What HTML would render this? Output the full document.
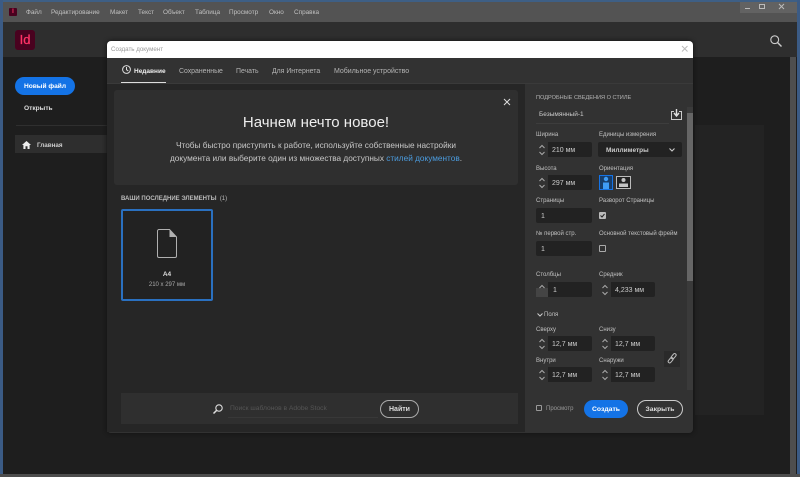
<!DOCTYPE html>
<html lang="ru"><head><meta charset="utf-8"><title>InDesign</title>
<style>
*{box-sizing:border-box}
html,body{margin:0;padding:0;width:800px;height:477px;overflow:hidden;background:#4a4a4a}
body{font-family:"Liberation Sans","Noto Sans CJK SC",sans-serif;position:relative;filter:blur(.3px)}
.a{position:absolute}
.t{position:absolute;white-space:nowrap;color:#c0c0c0;font-size:6px;line-height:10px;margin-top:1px}
.m{top:7px;color:#c0c0c0;font-size:6.4px}
.tb{top:66px;font-size:6.9px;color:#b4b4b4}
.i{position:absolute;background:#222;height:15px;border-radius:2px;width:56px}
.s{position:absolute;background:#323232;height:15px;width:12px}
.v{position:absolute;white-space:nowrap;color:#cccccc;font-size:7px;line-height:15px;margin-top:1px}
svg{position:absolute;overflow:visible}
</style></head><body>
<div class="a" style="left:0;top:0;width:800px;height:2px;background:#3e5f85"></div>
<div class="a" style="left:0;top:2px;width:800px;height:20px;background:#535353"></div>
<div class="a" style="left:0;top:0;width:3px;height:477px;background:#3b5b85"></div>
<div class="a" style="left:797px;top:0;width:3px;height:477px;background:#3b5b85"></div>
<div class="a" style="left:3px;top:22px;width:794px;height:35px;background:#2e2e2e"></div>
<div class="a" style="left:3px;top:57px;width:794px;height:417px;background:#1e1e1e"></div>
<div class="a" style="left:0;top:474px;width:800px;height:3px;background:#4d4d4d"></div>
<div class="a" style="left:790px;top:57px;width:6px;height:417px;background:#4e4e4e"></div>
<div class="a" style="left:695px;top:125px;width:69px;height:290px;background:#232323"></div>

<div class="a" style="left:9px;top:8px;width:8px;height:8px;background:#49021f;border-radius:1px;color:#ff3366;font-size:6px;line-height:8px;text-align:center;font-weight:bold">I</div>
<div class="t m" style="left:26px">Файл</div>
<div class="t m" style="left:51px">Редактирование</div>
<div class="t m" style="left:110px">Макет</div>
<div class="t m" style="left:138px">Текст</div>
<div class="t m" style="left:163px">Объект</div>
<div class="t m" style="left:195px">Таблица</div>
<div class="t m" style="left:229px">Просмотр</div>
<div class="t m" style="left:269px">Окно</div>
<div class="t m" style="left:294px">Справка</div>
<div class="a" style="left:740px;top:2px;width:57px;height:11px;background:#626262"></div>
<div class="a" style="left:745px;top:8px;width:5px;height:1px;background:#bbb"></div>
<div class="a" style="left:759px;top:4px;width:6px;height:5px;border:1px solid #bbb"></div>
<svg style="left:779px;top:4px" width="5" height="5"><path d="M0 0L5 5M5 0L0 5" stroke="#bbb" fill="none"/></svg>

<div class="a" style="left:15px;top:30px;width:20px;height:20px;background:#49021f;border-radius:3px;color:#ff3366;font-size:13px;line-height:20px;text-align:center;-webkit-text-stroke:.25px #ff3366">Id</div>
<svg style="left:770px;top:35px" width="12" height="12"><circle cx="4.7" cy="4.7" r="3.9" fill="none" stroke="#ccc" stroke-width="1.1"/><path d="M7.5 7.5L11.5 11.5" stroke="#ccc" stroke-width="1.4"/></svg>

<div class="a" style="left:15px;top:77px;width:60px;height:18px;padding-top:1px;background:#1473e6;border-radius:9px;color:#fff;font-size:6.6px;font-weight:bold;line-height:18px;text-align:center">Новый файл</div>
<div class="t" style="left:24px;top:103px;color:#ddd;font-size:6.6px;font-weight:bold">Открыть</div>
<div class="a" style="left:16px;top:125px;width:91px;height:1px;background:#2f2f2f"></div>
<div class="a" style="left:15px;top:135px;width:92px;height:18px;background:#2e2e2e"></div>
<svg style="left:22px;top:141px" width="9" height="8"><path d="M4.5 0L0 4H1.4V8H3.5V5.3H5.5V8H7.6V4H9Z" fill="#eee"/></svg>
<div class="t" style="left:37px;top:140px;color:#ccc;font-size:6.3px;font-weight:bold">Главная</div>

<div class="a" style="left:107px;top:41px;width:586px;height:392px;background:#323232;border-radius:4px;box-shadow:0 0 5px #111"></div>
<div class="a" style="left:107px;top:41px;width:586px;height:17px;background:#fff;border-radius:4px 4px 0 0"></div>
<div class="t" style="left:111px;top:44px;color:#999;font-size:6.2px">Создать документ</div>
<svg style="left:682px;top:46px" width="5.5" height="5.5"><path d="M0 0L5.5 5.5M5.5 0L0 5.5" stroke="#bbb" fill="none"/></svg>

<svg style="left:122px;top:65px" width="9" height="9"><circle cx="4.5" cy="4.5" r="3.9" fill="none" stroke="#ddd" stroke-width="1"/><path d="M4.5 2V4.7L6.3 6" fill="none" stroke="#ddd"/></svg>
<div class="t tb" style="left:134px;color:#eee;font-size:6.5px;font-weight:bold">Недавние</div>
<div class="t tb" style="left:179px">Сохраненные</div>
<div class="t tb" style="left:236px">Печать</div>
<div class="t tb" style="left:272px">Для Интернета</div>
<div class="t tb" style="left:334px;font-size:7px">Мобильное устройство</div>
<div class="a" style="left:121px;top:82px;width:45px;height:1.5px;background:#ddd"></div>
<div class="a" style="left:107px;top:83px;width:586px;height:1px;background:#3a3a3a"></div>

<div class="a" style="left:107px;top:84px;width:418px;height:348px;background:#262626"></div>
<div class="a" style="left:114px;top:90px;width:404px;height:95px;background:#2f2f2f;border-radius:3px"></div>
<svg style="left:503.500px;top:99px" width="6" height="6"><path d="M0 0L6 6M6 0L0 6" stroke="#ddd" stroke-width="1" fill="none"/></svg>
<div class="t" style="left:114px;top:113px;width:404px;text-align:center;font-size:15px;line-height:18px;color:#eee">Начнем нечто новое!</div>
<div class="t" style="left:114px;top:138px;width:404px;text-align:center;font-size:8.250px;line-height:13px;color:#c8c8c8">Чтобы быстро приступить к работе, используйте собственные настройки</div>
<div class="t" style="left:114px;top:151px;width:404px;text-align:center;font-size:8.250px;line-height:13px;color:#c8c8c8">документа или выберите один из множества доступных <span style="color:#4b9cdf">стилей документов</span>.</div>

<div class="t" style="left:121px;top:193px;font-size:6px;color:#bbb;font-weight:bold">ВАШИ ПОСЛЕДНИЕ ЭЛЕМЕНТЫ &nbsp;<span style="font-weight:normal">(1)</span></div>
<div class="a" style="left:121px;top:209px;width:92px;height:92px;border:2px solid #2a70c0;border-radius:2px;background:#222"></div>
<svg style="left:157px;top:229px" width="20" height="29"><path d="M2 .5H12.5L19.5 8V27A1.500 1.500 0 0 1 18 28.500H2A1.500 1.500 0 0 1 .5 27V2A1.500 1.500 0 0 1 2 .5Z" fill="none" stroke="#b0b0b0" stroke-width="1"/><path d="M12.5 .5V8H19.5Z" fill="#b0b0b0"/></svg>
<div class="t" style="left:121px;top:269px;width:92px;text-align:center;font-size:6.5px;font-weight:bold;color:#ddd">А4</div>
<div class="t" style="left:121px;top:279px;width:92px;text-align:center;font-size:6px;color:#aaa">210 x 297 мм</div>

<div class="a" style="left:121px;top:393px;width:397px;height:31px;background:#2f2f2f"></div>
<svg style="left:213px;top:404px" width="10" height="10"><circle cx="6" cy="4" r="3.2" fill="none" stroke="#ddd" stroke-width="1.1"/><path d="M3.700 6.300L.5 9.500" stroke="#ddd" stroke-width="1.5"/></svg>
<div class="t" style="left:230px;top:403px;font-size:6.7px;color:#555">Поиск шаблонов в Adobe Stock</div>
<div class="a" style="left:228px;top:417px;width:150px;height:1px;background:#383838"></div>
<div class="a" style="left:380px;top:400px;width:39px;height:17.5px;padding-top:1px;border:1px solid #aaa;border-radius:9px;color:#ddd;font-size:7px;font-weight:bold;line-height:15.5px;text-align:center">Найти</div>

<div class="t" style="left:536px;top:92px;font-size:5.6px;color:#b4b4b4">ПОДРОБНЫЕ СВЕДЕНИЯ О СТИЛЕ</div>
<div class="v" style="left:539px;top:106px;font-size:6.5px">Безымянный-1</div>
<div class="a" style="left:536px;top:123px;width:133px;height:1px;background:#3d3d3d"></div>
<svg style="left:671px;top:109px" width="11" height="11"><path d="M3 2.500H.5V10.500H10.500V2.500H8" fill="none" stroke="#ccc"/><path d="M5.500 0V6.500M3 4L5.500 7L8 4" fill="none" stroke="#ddd" stroke-width="1.400"/></svg>
<div class="a" style="left:687px;top:107px;width:6px;height:283px;background:#3a3a3a"></div>
<div class="a" style="left:687px;top:113px;width:6px;height:168px;background:#666"></div>

<div class="t" style="left:536px;top:129px">Ширина</div>
<div class="t" style="left:599px;top:129px">Единицы измерения</div>
<div class="i" style="left:536px;top:142px"></div><div class="s" style="left:536px;top:142px"></div>
<svg style="left:539px;top:145px" width="6" height="10"><path d="M.5 3L3 .5L5.500 3M.5 7L3 9.500L5.500 7" fill="none" stroke="#aaa"/></svg>
<div class="v" style="left:552px;top:142px">210 мм</div>
<div class="i" style="left:598px;top:142px;width:84px"></div>
<div class="v" style="left:606px;top:142px;font-weight:bold;color:#ccc;font-size:6.5px">Миллиметры</div>
<svg style="left:669px;top:148px" width="6" height="4"><path d="M.5 .5L3 3L5.500 .5" fill="none" stroke="#ccc" stroke-width="1.100"/></svg>

<div class="t" style="left:536px;top:163px">Высота</div>
<div class="t" style="left:599px;top:163px">Ориентация</div>
<div class="i" style="left:536px;top:175px"></div><div class="s" style="left:536px;top:175px"></div>
<svg style="left:539px;top:178px" width="6" height="10"><path d="M.5 3L3 .5L5.500 3M.5 7L3 9.500L5.500 7" fill="none" stroke="#aaa"/></svg>
<div class="v" style="left:552px;top:175px">297 мм</div>
<div class="a" style="left:599px;top:175px;width:14px;height:15px;border:1px solid #1473e6;background:#173d6a"></div>
<svg style="left:601px;top:176px" width="10" height="13"><circle cx="5" cy="3" r="2.200" fill="#3f9cf5"/><path d="M2 6.500H8V13H2Z" fill="#3f9cf5"/></svg>
<div class="a" style="left:616px;top:176px;width:15px;height:13px;border:1px solid #bbb;background:#222"></div>
<svg style="left:618px;top:177px" width="11" height="10"><circle cx="5.5" cy="3" r="2" fill="#c4c4c4"/><path d="M1 6.500H10V10H1Z" fill="#c4c4c4"/></svg>

<div class="t" style="left:536px;top:195px">Страницы</div>
<div class="t" style="left:599px;top:195px">Разворот Страницы</div>
<div class="i" style="left:536px;top:208px"></div>
<div class="v" style="left:541px;top:208px">1</div>
<div class="a" style="left:599px;top:212px;width:7px;height:7px;background:#bbb;border-radius:1px"></div>
<svg style="left:600px;top:213px" width="5" height="5"><path d="M.5 2.500L2 4L4.500 1" fill="none" stroke="#222"/></svg>

<div class="t" style="left:536px;top:228px">№ первой стр.</div>
<div class="t" style="left:599px;top:228px">Основной текстовый фрейм</div>
<div class="i" style="left:536px;top:241px"></div>
<div class="v" style="left:541px;top:241px">1</div>
<div class="a" style="left:599px;top:245px;width:7px;height:7px;border:1px solid #aaa;border-radius:1px"></div>

<div class="t" style="left:536px;top:269px">Столбцы</div>
<div class="t" style="left:599px;top:269px">Средник</div>
<div class="i" style="left:536px;top:282px"></div><div class="s" style="left:536px;top:282px"></div>
<div class="a" style="left:536px;top:288px;width:12px;height:9px;background:#444"></div>
<svg style="left:539px;top:285px" width="6" height="4"><path d="M.5 3L3 .5L5.500 3" fill="none" stroke="#aaa"/></svg>
<div class="v" style="left:553px;top:282px">1</div>
<div class="i" style="left:599px;top:282px"></div><div class="s" style="left:599px;top:282px"></div>
<svg style="left:602px;top:285px" width="6" height="10"><path d="M.5 3L3 .5L5.500 3M.5 7L3 9.500L5.500 7" fill="none" stroke="#aaa"/></svg>
<div class="v" style="left:615px;top:282px">4,233 мм</div>

<svg style="left:537px;top:313px" width="6" height="4"><path d="M.5 .5L3 3L5.500 .5" fill="none" stroke="#ccc"/></svg>
<div class="t" style="left:544px;top:309px">Поля</div>

<div class="t" style="left:536px;top:324px">Сверху</div>
<div class="t" style="left:599px;top:324px">Снизу</div>
<div class="i" style="left:536px;top:336px"></div><div class="s" style="left:536px;top:336px"></div>
<svg style="left:539px;top:339px" width="6" height="10"><path d="M.5 3L3 .5L5.500 3M.5 7L3 9.500L5.500 7" fill="none" stroke="#aaa"/></svg>
<div class="v" style="left:552px;top:336px">12,7 мм</div>
<div class="i" style="left:599px;top:336px"></div><div class="s" style="left:599px;top:336px"></div>
<svg style="left:602px;top:339px" width="6" height="10"><path d="M.5 3L3 .5L5.500 3M.5 7L3 9.500L5.500 7" fill="none" stroke="#aaa"/></svg>
<div class="v" style="left:615px;top:336px">12,7 мм</div>

<div class="t" style="left:536px;top:355px">Внутри</div>
<div class="t" style="left:599px;top:355px">Снаружи</div>
<div class="i" style="left:536px;top:367px"></div><div class="s" style="left:536px;top:367px"></div>
<svg style="left:539px;top:370px" width="6" height="10"><path d="M.5 3L3 .5L5.500 3M.5 7L3 9.500L5.500 7" fill="none" stroke="#aaa"/></svg>
<div class="v" style="left:552px;top:367px">12,7 мм</div>
<div class="i" style="left:599px;top:367px"></div><div class="s" style="left:599px;top:367px"></div>
<svg style="left:602px;top:370px" width="6" height="10"><path d="M.5 3L3 .5L5.500 3M.5 7L3 9.500L5.500 7" fill="none" stroke="#aaa"/></svg>
<div class="v" style="left:615px;top:367px">12,7 мм</div>
<div class="a" style="left:664px;top:351px;width:16px;height:16px;background:#2a2a2a"></div>
<svg style="left:667px;top:354px" width="10" height="10"><rect x="-2" y="-1.500" width="6" height="3" rx="1.500" transform="translate(3,7) rotate(-50)" fill="none" stroke="#bbb"/><rect x="-2" y="-1.500" width="6" height="3" rx="1.500" transform="translate(6,3) rotate(-50)" fill="none" stroke="#bbb"/></svg>

<div class="a" style="left:536px;top:405px;width:6px;height:6px;border:1px solid #999;border-radius:1px"></div>
<div class="t" style="left:546px;top:403px;color:#999">Просмотр</div>
<div class="a" style="left:584px;top:400px;width:44px;height:17.500px;padding-top:1px;background:#1473e6;border-radius:9px;color:#fff;font-size:6.8px;font-weight:bold;line-height:17.500px;text-align:center">Создать</div>
<div class="a" style="left:637px;top:400px;width:46px;height:17.500px;padding-top:1px;border:1px solid #ccc;border-radius:9px;color:#ddd;font-size:6.8px;font-weight:bold;line-height:15.500px;text-align:center">Закрыть</div>
</body></html>
